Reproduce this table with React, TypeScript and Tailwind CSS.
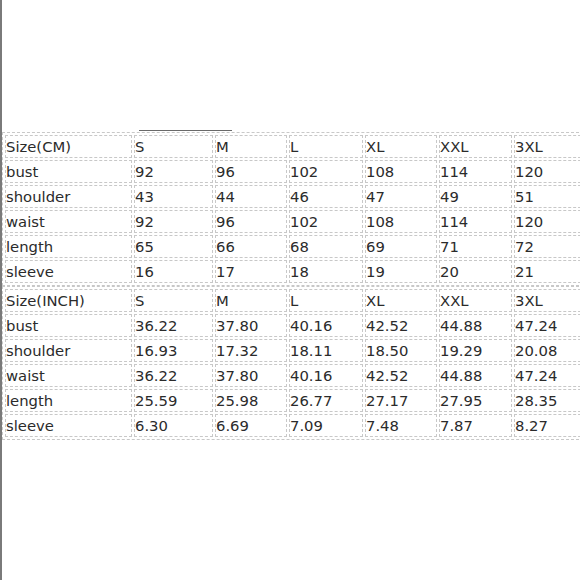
const CM_ROWS = [
  ["Size(CM)", "S", "M", "L", "XL", "XXL", "3XL"],
  ["bust", "92", "96", "102", "108", "114", "120"],
  ["shoulder", "43", "44", "46", "47", "49", "51"],
  ["waist", "92", "96", "102", "108", "114", "120"],
  ["length", "65", "66", "68", "69", "71", "72"],
  ["sleeve", "16", "17", "18", "19", "20", "21"],
];

const INCH_ROWS = [
  ["Size(INCH)", "S", "M", "L", "XL", "XXL", "3XL"],
  ["bust", "36.22", "37.80", "40.16", "42.52", "44.88", "47.24"],
  ["shoulder", "16.93", "17.32", "18.11", "18.50", "19.29", "20.08"],
  ["waist", "36.22", "37.80", "40.16", "42.52", "44.88", "47.24"],
  ["length", "25.59", "25.98", "26.77", "27.17", "27.95", "28.35"],
  ["sleeve", "6.30", "6.69", "7.09", "7.48", "7.87", "8.27"],
];

// widths of each column cell (border included)
const COL_W = ["w-[127px]", "w-[79px]", "w-[72px]", "w-[74px]", "w-[72px]", "w-[73px]", "w-[72px]"];

function SizeTable({ rows }: { rows: string[][] }) {
  return (
    <table className="border-separate border-spacing-[2px] border border-dashed border-[#c8c8c8] table-fixed">
      <tbody>
        {rows.map((r, i) => (
          <tr key={i}>
            {r.map((c, j) => (
              <td
                key={j}
                className={`${COL_W[j]} h-[23px] p-0 pt-[2px] border border-dashed border-[#c8c8c8] align-middle whitespace-nowrap`}
              >
                {c}
              </td>
            ))}
          </tr>
        ))}
      </tbody>
    </table>
  );
}

export default function App() {
  return (
    <div
      className="w-[580px] h-[580px] overflow-hidden bg-white border-l-2 border-[#7a7a7a] text-[14.8px] text-[#2b2b2b] leading-none"
      style={{ fontFamily: '"DejaVu Sans", Verdana, sans-serif' }}
    >
      <div className="mt-[130px] ml-[137px] w-[93px] h-px bg-[#6a6a6a]" />
      <div className="w-[620px] mt-[1px]">
        <SizeTable rows={CM_ROWS} />
        <SizeTable rows={INCH_ROWS} />
      </div>
    </div>
  );
}
